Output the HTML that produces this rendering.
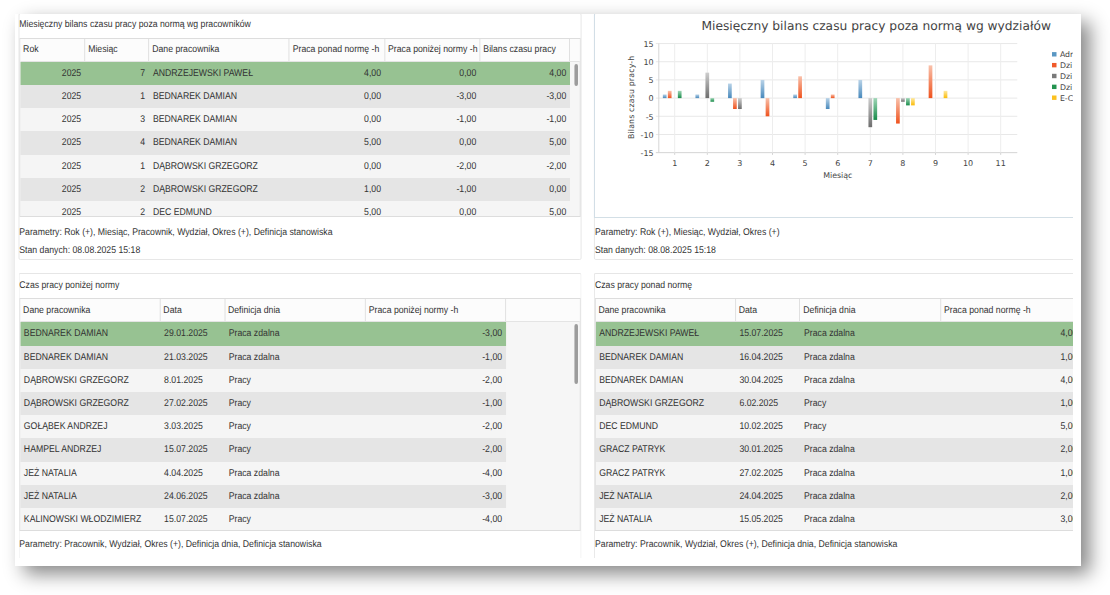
<!DOCTYPE html>
<html lang="pl"><head><meta charset="utf-8"><title>Bilans czasu pracy</title>
<style>
html,body{margin:0;padding:0;background:#fff;}
body{width:1110px;height:595px;overflow:hidden;position:relative;font-family:"Liberation Sans",Arial,sans-serif;font-size:9.8px;color:#333;text-rendering:geometricPrecision;}
#shot{position:absolute;left:14.7px;top:14.3px;width:1066.4px;height:551.6px;background:#fff;box-shadow:9px 8px 18px rgba(0,0,0,.47);overflow:hidden;}
#clip{position:absolute;left:0;top:0;width:1058px;height:551.6px;overflow:hidden;}
#sq{position:absolute;left:0;top:0;width:1300px;height:551.6px;transform:scaleX(0.888);transform-origin:0 0;}
.panel{position:absolute;border:1px solid #e6e6e6;border-radius:2px;box-sizing:border-box;background:#fff;}
.t{position:absolute;white-space:nowrap;line-height:12px;}
.grid{position:absolute;box-sizing:border-box;border:1px solid #dddddd;background:#f6f6f6;overflow:hidden;}
.hd{position:absolute;left:0;top:0;height:22.8px;background:#fcfcfc;border-bottom:1px solid #e4e4e4;box-sizing:border-box;}
.hc{position:absolute;top:0;height:21.8px;line-height:21.8px;box-sizing:border-box;border-right:1px solid #dddddd;padding-left:3.3px;white-space:nowrap;overflow:hidden;}
.r{position:absolute;left:0;height:23.2px;line-height:23.2px;}
.c{position:absolute;top:0;height:100%;box-sizing:border-box;padding:0 4.6px 0 4.15px;white-space:nowrap;overflow:hidden;}
.n{text-align:right;}
.sb{position:absolute;background:#9c9c9c;border-radius:2px;}
svg text{font-family:"DejaVu Sans",Verdana,sans-serif;fill:#444;}

</style></head><body>
<div id="shot"><div id="clip"><div id="sq">
<div class="panel" style="left:3.83px;top:-1.1px;width:633.84px;height:246.6px;"></div>
<div class="t" style="left:4.84px;top:4.8px">Miesięczny bilans czasu pracy poza normą wg pracowników</div>
<div class="grid" style="left:4.83px;top:23.7px;width:631.84px;height:179.5px">
<div class="hd" style="width:631.84px;height:22.8px">
<div class="hc" style="left:0px;width:73.28px;height:21.8px;line-height:21.8px">Rok</div>
<div class="hc" style="left:73.28px;width:72.07px;height:21.8px;line-height:21.8px">Miesiąc</div>
<div class="hc" style="left:145.35px;width:158.28px;height:21.8px;line-height:21.8px">Dane pracownika</div>
<div class="hc" style="left:303.63px;width:107.32px;height:21.8px;line-height:21.8px">Praca ponad normę -h</div>
<div class="hc" style="left:410.95px;width:107.32px;height:21.8px;line-height:21.8px">Praca poniżej normy -h</div>
<div class="hc" style="left:518.27px;width:101.35px;height:21.8px;line-height:21.8px">Bilans czasu pracy</div>
<div class="hc" style="left:619.62px;width:11.71px;height:21.8px;line-height:21.8px"></div>
</div>
<div class="r" style="top:22.8px;width:619.62px;background:#97c292">
<div class="c n" style="left:0px;width:73.28px">2025</div>
<div class="c n" style="left:73.28px;width:72.07px">7</div>
<div class="c" style="left:145.35px;width:158.28px">ANDRZEJEWSKI PAWEŁ</div>
<div class="c n" style="left:303.63px;width:107.32px">4,00</div>
<div class="c n" style="left:410.95px;width:107.32px">0,00</div>
<div class="c n" style="left:518.27px;width:101.35px">4,00</div>
</div>
<div class="r" style="top:46px;width:619.62px;background:#e5e5e5">
<div class="c n" style="left:0px;width:73.28px">2025</div>
<div class="c n" style="left:73.28px;width:72.07px">1</div>
<div class="c" style="left:145.35px;width:158.28px">BEDNAREK DAMIAN</div>
<div class="c n" style="left:303.63px;width:107.32px">0,00</div>
<div class="c n" style="left:410.95px;width:107.32px">-3,00</div>
<div class="c n" style="left:518.27px;width:101.35px">-3,00</div>
</div>
<div class="r" style="top:69.2px;width:619.62px;background:#f5f5f5">
<div class="c n" style="left:0px;width:73.28px">2025</div>
<div class="c n" style="left:73.28px;width:72.07px">3</div>
<div class="c" style="left:145.35px;width:158.28px">BEDNAREK DAMIAN</div>
<div class="c n" style="left:303.63px;width:107.32px">0,00</div>
<div class="c n" style="left:410.95px;width:107.32px">-1,00</div>
<div class="c n" style="left:518.27px;width:101.35px">-1,00</div>
</div>
<div class="r" style="top:92.4px;width:619.62px;background:#e5e5e5">
<div class="c n" style="left:0px;width:73.28px">2025</div>
<div class="c n" style="left:73.28px;width:72.07px">4</div>
<div class="c" style="left:145.35px;width:158.28px">BEDNAREK DAMIAN</div>
<div class="c n" style="left:303.63px;width:107.32px">5,00</div>
<div class="c n" style="left:410.95px;width:107.32px">0,00</div>
<div class="c n" style="left:518.27px;width:101.35px">5,00</div>
</div>
<div class="r" style="top:115.6px;width:619.62px;background:#f5f5f5">
<div class="c n" style="left:0px;width:73.28px">2025</div>
<div class="c n" style="left:73.28px;width:72.07px">1</div>
<div class="c" style="left:145.35px;width:158.28px">DĄBROWSKI GRZEGORZ</div>
<div class="c n" style="left:303.63px;width:107.32px">0,00</div>
<div class="c n" style="left:410.95px;width:107.32px">-2,00</div>
<div class="c n" style="left:518.27px;width:101.35px">-2,00</div>
</div>
<div class="r" style="top:138.8px;width:619.62px;background:#e5e5e5">
<div class="c n" style="left:0px;width:73.28px">2025</div>
<div class="c n" style="left:73.28px;width:72.07px">2</div>
<div class="c" style="left:145.35px;width:158.28px">DĄBROWSKI GRZEGORZ</div>
<div class="c n" style="left:303.63px;width:107.32px">1,00</div>
<div class="c n" style="left:410.95px;width:107.32px">-1,00</div>
<div class="c n" style="left:518.27px;width:101.35px">0,00</div>
</div>
<div class="r" style="top:162px;width:619.62px;background:#f5f5f5">
<div class="c n" style="left:0px;width:73.28px">2025</div>
<div class="c n" style="left:73.28px;width:72.07px">2</div>
<div class="c" style="left:145.35px;width:158.28px">DEC EDMUND</div>
<div class="c n" style="left:303.63px;width:107.32px">5,00</div>
<div class="c n" style="left:410.95px;width:107.32px">0,00</div>
<div class="c n" style="left:518.27px;width:101.35px">5,00</div>
</div>
<div class="sb" style="left:623.73px;top:24.9px;width:4.73px;height:22.5px"></div>
</div>
<div class="t" style="left:4.84px;top:212.8px">Parametry: Rok (+), Miesiąc, Pracownik, Wydział, Okres (+), Definicja stanowiska</div>
<div class="t" style="left:4.84px;top:230.8px">Stan danych: 08.08.2025 15:18</div>
<div class="panel" style="left:3.83px;top:258.6px;width:633.84px;height:284.7px;border-bottom:none;border-radius:2px 2px 0 0"></div>
<div class="t" style="left:4.84px;top:265.8px">Czas pracy poniżej normy</div>
<div class="grid" style="left:4.83px;top:283.9px;width:631.84px;height:233.2px">
<div class="hd" style="width:631.84px;height:23.2px">
<div class="hc" style="left:0px;width:157.96px;height:22.2px;line-height:23.8px">Dane pracownika</div>
<div class="hc" style="left:157.96px;width:72.75px;height:22.2px;line-height:23.8px">Data</div>
<div class="hc" style="left:230.71px;width:158.56px;height:22.2px;line-height:23.8px">Definicja dnia</div>
<div class="hc" style="left:389.27px;width:158px;height:22.2px;line-height:23.8px">Praca poniżej normy -h</div>
<div class="hc" style="left:547.27px;width:84.07px;height:22.2px;line-height:23.8px"></div>
</div>
<div class="r" style="top:23.2px;width:547.27px;background:#97c292">
<div class="c" style="left:0px;width:157.96px">BEDNAREK DAMIAN</div>
<div class="c" style="left:157.96px;width:72.75px">29.01.2025</div>
<div class="c" style="left:230.71px;width:158.56px">Praca zdalna</div>
<div class="c n" style="left:389.27px;width:158px">-3,00</div>
</div>
<div class="r" style="top:46.4px;width:547.27px;background:#e5e5e5">
<div class="c" style="left:0px;width:157.96px">BEDNAREK DAMIAN</div>
<div class="c" style="left:157.96px;width:72.75px">21.03.2025</div>
<div class="c" style="left:230.71px;width:158.56px">Praca zdalna</div>
<div class="c n" style="left:389.27px;width:158px">-1,00</div>
</div>
<div class="r" style="top:69.6px;width:547.27px;background:#f5f5f5">
<div class="c" style="left:0px;width:157.96px">DĄBROWSKI GRZEGORZ</div>
<div class="c" style="left:157.96px;width:72.75px">8.01.2025</div>
<div class="c" style="left:230.71px;width:158.56px">Pracy</div>
<div class="c n" style="left:389.27px;width:158px">-2,00</div>
</div>
<div class="r" style="top:92.8px;width:547.27px;background:#e5e5e5">
<div class="c" style="left:0px;width:157.96px">DĄBROWSKI GRZEGORZ</div>
<div class="c" style="left:157.96px;width:72.75px">27.02.2025</div>
<div class="c" style="left:230.71px;width:158.56px">Pracy</div>
<div class="c n" style="left:389.27px;width:158px">-1,00</div>
</div>
<div class="r" style="top:116px;width:547.27px;background:#f5f5f5">
<div class="c" style="left:0px;width:157.96px">GOŁĄBEK ANDRZEJ</div>
<div class="c" style="left:157.96px;width:72.75px">3.03.2025</div>
<div class="c" style="left:230.71px;width:158.56px">Pracy</div>
<div class="c n" style="left:389.27px;width:158px">-2,00</div>
</div>
<div class="r" style="top:139.2px;width:547.27px;background:#e5e5e5">
<div class="c" style="left:0px;width:157.96px">HAMPEL ANDRZEJ</div>
<div class="c" style="left:157.96px;width:72.75px">15.07.2025</div>
<div class="c" style="left:230.71px;width:158.56px">Pracy</div>
<div class="c n" style="left:389.27px;width:158px">-2,00</div>
</div>
<div class="r" style="top:162.4px;width:547.27px;background:#f5f5f5">
<div class="c" style="left:0px;width:157.96px">JEŻ NATALIA</div>
<div class="c" style="left:157.96px;width:72.75px">4.04.2025</div>
<div class="c" style="left:230.71px;width:158.56px">Praca zdalna</div>
<div class="c n" style="left:389.27px;width:158px">-4,00</div>
</div>
<div class="r" style="top:185.6px;width:547.27px;background:#e5e5e5">
<div class="c" style="left:0px;width:157.96px">JEŻ NATALIA</div>
<div class="c" style="left:157.96px;width:72.75px">24.06.2025</div>
<div class="c" style="left:230.71px;width:158.56px">Praca zdalna</div>
<div class="c n" style="left:389.27px;width:158px">-3,00</div>
</div>
<div class="r" style="top:208.8px;width:547.27px;background:#f5f5f5">
<div class="c" style="left:0px;width:157.96px">KALINOWSKI WŁODZIMIERZ</div>
<div class="c" style="left:157.96px;width:72.75px">15.07.2025</div>
<div class="c" style="left:230.71px;width:158.56px">Pracy</div>
<div class="c n" style="left:389.27px;width:158px">-4,00</div>
</div>
<div class="sb" style="left:623.95px;top:24.6px;width:4.73px;height:60.6px"></div>
</div>
<div class="t" style="left:4.84px;top:524.8px">Parametry: Pracownik, Wydział, Okres (+), Definicja dnia, Definicja stanowiska</div>
<div class="panel" style="left:651.69px;top:258.6px;width:633.84px;height:284.7px;border-bottom:none;border-radius:2px 2px 0 0"></div>
<div class="t" style="left:653.15px;top:265.8px">Czas pracy ponad normę</div>
<div class="grid" style="left:652.69px;top:283.9px;width:631.84px;height:233.2px">
<div class="hd" style="width:631.84px;height:23.2px">
<div class="hc" style="left:0px;width:157.96px;height:22.2px;line-height:23.8px">Dane pracownika</div>
<div class="hc" style="left:157.96px;width:72.75px;height:22.2px;line-height:23.8px">Data</div>
<div class="hc" style="left:230.71px;width:158.56px;height:22.2px;line-height:23.8px">Definicja dnia</div>
<div class="hc" style="left:389.27px;width:158px;height:22.2px;line-height:23.8px">Praca ponad normę -h</div>
<div class="hc" style="left:547.27px;width:84.07px;height:22.2px;line-height:23.8px"></div>
</div>
<div class="r" style="top:23.2px;width:547.27px;background:#97c292">
<div class="c" style="left:0px;width:157.96px">ANDRZEJEWSKI PAWEŁ</div>
<div class="c" style="left:157.96px;width:72.75px">15.07.2025</div>
<div class="c" style="left:230.71px;width:158.56px">Praca zdalna</div>
<div class="c n" style="left:389.27px;width:158px">4,00</div>
</div>
<div class="r" style="top:46.4px;width:547.27px;background:#e5e5e5">
<div class="c" style="left:0px;width:157.96px">BEDNAREK DAMIAN</div>
<div class="c" style="left:157.96px;width:72.75px">16.04.2025</div>
<div class="c" style="left:230.71px;width:158.56px">Praca zdalna</div>
<div class="c n" style="left:389.27px;width:158px">1,00</div>
</div>
<div class="r" style="top:69.6px;width:547.27px;background:#f5f5f5">
<div class="c" style="left:0px;width:157.96px">BEDNAREK DAMIAN</div>
<div class="c" style="left:157.96px;width:72.75px">30.04.2025</div>
<div class="c" style="left:230.71px;width:158.56px">Praca zdalna</div>
<div class="c n" style="left:389.27px;width:158px">4,00</div>
</div>
<div class="r" style="top:92.8px;width:547.27px;background:#e5e5e5">
<div class="c" style="left:0px;width:157.96px">DĄBROWSKI GRZEGORZ</div>
<div class="c" style="left:157.96px;width:72.75px">6.02.2025</div>
<div class="c" style="left:230.71px;width:158.56px">Pracy</div>
<div class="c n" style="left:389.27px;width:158px">1,00</div>
</div>
<div class="r" style="top:116px;width:547.27px;background:#f5f5f5">
<div class="c" style="left:0px;width:157.96px">DEC EDMUND</div>
<div class="c" style="left:157.96px;width:72.75px">10.02.2025</div>
<div class="c" style="left:230.71px;width:158.56px">Pracy</div>
<div class="c n" style="left:389.27px;width:158px">5,00</div>
</div>
<div class="r" style="top:139.2px;width:547.27px;background:#e5e5e5">
<div class="c" style="left:0px;width:157.96px">GRACZ PATRYK</div>
<div class="c" style="left:157.96px;width:72.75px">30.01.2025</div>
<div class="c" style="left:230.71px;width:158.56px">Praca zdalna</div>
<div class="c n" style="left:389.27px;width:158px">2,00</div>
</div>
<div class="r" style="top:162.4px;width:547.27px;background:#f5f5f5">
<div class="c" style="left:0px;width:157.96px">GRACZ PATRYK</div>
<div class="c" style="left:157.96px;width:72.75px">27.02.2025</div>
<div class="c" style="left:230.71px;width:158.56px">Praca zdalna</div>
<div class="c n" style="left:389.27px;width:158px">1,00</div>
</div>
<div class="r" style="top:185.6px;width:547.27px;background:#e5e5e5">
<div class="c" style="left:0px;width:157.96px">JEŻ NATALIA</div>
<div class="c" style="left:157.96px;width:72.75px">24.04.2025</div>
<div class="c" style="left:230.71px;width:158.56px">Praca zdalna</div>
<div class="c n" style="left:389.27px;width:158px">2,00</div>
</div>
<div class="r" style="top:208.8px;width:547.27px;background:#f5f5f5">
<div class="c" style="left:0px;width:157.96px">JEŻ NATALIA</div>
<div class="c" style="left:157.96px;width:72.75px">15.05.2025</div>
<div class="c" style="left:230.71px;width:158.56px">Praca zdalna</div>
<div class="c n" style="left:389.27px;width:158px">3,00</div>
</div>
</div>
<div class="t" style="left:653.15px;top:524.8px">Parametry: Pracownik, Wydział, Okres (+), Definicja dnia, Definicja stanowiska</div>
<div class="panel" style="left:651.69px;top:-1.1px;width:633.84px;height:246.6px"></div>
<div style="position:absolute;box-sizing:border-box;left:651.69px;top:-1.1px;width:633.84px;height:204.3px;border-left:1px solid #cfdde6;border-bottom:1px solid #d3dfe6"></div>
<div class="t" style="left:653.15px;top:212.8px">Parametry: Rok (+), Miesiąc, Wydział, Okres (+)</div>
<div class="t" style="left:653.15px;top:230.8px">Stan danych: 08.08.2025 15:18</div>
</div>
<svg style="position:absolute;left:580.3px;top:0.7px" width="562" height="200" viewBox="0 0 562 200">
<defs>
<linearGradient id="b" x1="0" y1="0" x2="0" y2="1"><stop offset="0" stop-color="#b9d3e8"/><stop offset="1" stop-color="#4889bc"/></linearGradient>
<linearGradient id="o" x1="0" y1="0" x2="0" y2="1"><stop offset="0" stop-color="#f9c1ab"/><stop offset="1" stop-color="#ef521d"/></linearGradient>
<linearGradient id="g" x1="0" y1="0" x2="0" y2="1"><stop offset="0" stop-color="#cecece"/><stop offset="1" stop-color="#6d6d6d"/></linearGradient>
<linearGradient id="gr" x1="0" y1="0" x2="0" y2="1"><stop offset="0" stop-color="#a0d6b7"/><stop offset="1" stop-color="#178b49"/></linearGradient>
<linearGradient id="y" x1="0" y1="0" x2="0" y2="1"><stop offset="0" stop-color="#fde8a0"/><stop offset="1" stop-color="#fbbc08"/></linearGradient>
</defs>
<text x="281.2" y="14.6" font-size="12.25" text-anchor="middle" fill="#484848">Miesięczny bilans czasu pracy poza normą wg wydziałów</text>
<line x1="60.8" y1="28.55" x2="422.3" y2="28.55" stroke="#e8e8e8" stroke-width="1"/>
<text x="58.7" y="31.85" font-size="8" text-anchor="end">15</text>
<line x1="60.8" y1="46.73" x2="422.3" y2="46.73" stroke="#e8e8e8" stroke-width="1"/>
<text x="58.7" y="50.03" font-size="8" text-anchor="end">10</text>
<line x1="60.8" y1="64.92" x2="422.3" y2="64.92" stroke="#e8e8e8" stroke-width="1"/>
<text x="58.7" y="68.22" font-size="8" text-anchor="end">5</text>
<line x1="60.8" y1="83.1" x2="422.3" y2="83.1" stroke="#e8e8e8" stroke-width="1"/>
<text x="58.7" y="86.4" font-size="8" text-anchor="end">0</text>
<line x1="60.8" y1="101.28" x2="422.3" y2="101.28" stroke="#e8e8e8" stroke-width="1"/>
<text x="58.7" y="104.58" font-size="8" text-anchor="end">-5</text>
<line x1="60.8" y1="119.47" x2="422.3" y2="119.47" stroke="#e8e8e8" stroke-width="1"/>
<text x="58.7" y="122.77" font-size="8" text-anchor="end">-10</text>
<line x1="60.8" y1="137.65" x2="422.3" y2="137.65" stroke="#d4d4d4" stroke-width="1"/>
<text x="58.7" y="140.95" font-size="8" text-anchor="end">-15</text>
<line x1="79.7" y1="28.55" x2="79.7" y2="137.65" stroke="#ededed" stroke-width="1"/>
<line x1="79.7" y1="137.65" x2="79.7" y2="139.85" stroke="#d4d4d4" stroke-width="1"/>
<text x="79.7" y="150.5" font-size="8" text-anchor="middle">1</text>
<line x1="112.3" y1="28.55" x2="112.3" y2="137.65" stroke="#ededed" stroke-width="1"/>
<line x1="112.3" y1="137.65" x2="112.3" y2="139.85" stroke="#d4d4d4" stroke-width="1"/>
<text x="112.3" y="150.5" font-size="8" text-anchor="middle">2</text>
<line x1="144.9" y1="28.55" x2="144.9" y2="137.65" stroke="#ededed" stroke-width="1"/>
<line x1="144.9" y1="137.65" x2="144.9" y2="139.85" stroke="#d4d4d4" stroke-width="1"/>
<text x="144.9" y="150.5" font-size="8" text-anchor="middle">3</text>
<line x1="177.5" y1="28.55" x2="177.5" y2="137.65" stroke="#ededed" stroke-width="1"/>
<line x1="177.5" y1="137.65" x2="177.5" y2="139.85" stroke="#d4d4d4" stroke-width="1"/>
<text x="177.5" y="150.5" font-size="8" text-anchor="middle">4</text>
<line x1="210.1" y1="28.55" x2="210.1" y2="137.65" stroke="#ededed" stroke-width="1"/>
<line x1="210.1" y1="137.65" x2="210.1" y2="139.85" stroke="#d4d4d4" stroke-width="1"/>
<text x="210.1" y="150.5" font-size="8" text-anchor="middle">5</text>
<line x1="242.7" y1="28.55" x2="242.7" y2="137.65" stroke="#ededed" stroke-width="1"/>
<line x1="242.7" y1="137.65" x2="242.7" y2="139.85" stroke="#d4d4d4" stroke-width="1"/>
<text x="242.7" y="150.5" font-size="8" text-anchor="middle">6</text>
<line x1="275.3" y1="28.55" x2="275.3" y2="137.65" stroke="#ededed" stroke-width="1"/>
<line x1="275.3" y1="137.65" x2="275.3" y2="139.85" stroke="#d4d4d4" stroke-width="1"/>
<text x="275.3" y="150.5" font-size="8" text-anchor="middle">7</text>
<line x1="307.9" y1="28.55" x2="307.9" y2="137.65" stroke="#ededed" stroke-width="1"/>
<line x1="307.9" y1="137.65" x2="307.9" y2="139.85" stroke="#d4d4d4" stroke-width="1"/>
<text x="307.9" y="150.5" font-size="8" text-anchor="middle">8</text>
<line x1="340.5" y1="28.55" x2="340.5" y2="137.65" stroke="#ededed" stroke-width="1"/>
<line x1="340.5" y1="137.65" x2="340.5" y2="139.85" stroke="#d4d4d4" stroke-width="1"/>
<text x="340.5" y="150.5" font-size="8" text-anchor="middle">9</text>
<line x1="373.1" y1="28.55" x2="373.1" y2="137.65" stroke="#ededed" stroke-width="1"/>
<line x1="373.1" y1="137.65" x2="373.1" y2="139.85" stroke="#d4d4d4" stroke-width="1"/>
<text x="373.1" y="150.5" font-size="8" text-anchor="middle">10</text>
<line x1="405.7" y1="28.55" x2="405.7" y2="137.65" stroke="#ededed" stroke-width="1"/>
<line x1="405.7" y1="137.65" x2="405.7" y2="139.85" stroke="#d4d4d4" stroke-width="1"/>
<text x="405.7" y="150.5" font-size="8" text-anchor="middle">11</text>
<line x1="63.8" y1="28.55" x2="63.8" y2="137.65" stroke="#d6d6d6" stroke-width="1"/>
<text x="242.8" y="163.4" font-size="7.9" text-anchor="middle">Miesiąc</text>
<text transform="translate(39.3 82.3) rotate(-90)" font-size="7.9" letter-spacing="0.12" text-anchor="middle">Bilans czasu pracy-h</text>
<rect x="67.85" y="79.46" width="3.7" height="3.64" fill="url(#b)"/>
<rect x="72.85" y="75.83" width="3.7" height="7.27" fill="url(#o)"/>
<rect x="82.85" y="75.83" width="3.7" height="7.27" fill="url(#gr)"/>
<rect x="100.45" y="79.46" width="3.7" height="3.64" fill="url(#b)"/>
<rect x="110.45" y="57.64" width="3.7" height="25.46" fill="url(#g)"/>
<rect x="115.45" y="83.1" width="3.7" height="3.64" fill="url(#gr)"/>
<rect x="133.05" y="68.55" width="3.7" height="14.55" fill="url(#b)"/>
<rect x="138.05" y="83.1" width="3.7" height="10.91" fill="url(#o)"/>
<rect x="143.05" y="83.1" width="3.7" height="10.91" fill="url(#g)"/>
<rect x="165.65" y="64.92" width="3.7" height="18.18" fill="url(#b)"/>
<rect x="170.65" y="83.1" width="3.7" height="18.18" fill="url(#o)"/>
<rect x="198.25" y="79.46" width="3.7" height="3.64" fill="url(#b)"/>
<rect x="203.25" y="61.28" width="3.7" height="21.82" fill="url(#o)"/>
<rect x="230.85" y="83.1" width="3.7" height="10.91" fill="url(#b)"/>
<rect x="235.85" y="79.46" width="3.7" height="3.64" fill="url(#o)"/>
<rect x="263.45" y="64.92" width="3.7" height="18.18" fill="url(#b)"/>
<rect x="273.45" y="83.1" width="3.7" height="29.09" fill="url(#g)"/>
<rect x="278.45" y="83.1" width="3.7" height="21.82" fill="url(#gr)"/>
<rect x="301.05" y="83.1" width="3.7" height="25.46" fill="url(#o)"/>
<rect x="306.05" y="83.1" width="3.7" height="3.64" fill="url(#g)"/>
<rect x="311.05" y="83.1" width="3.7" height="7.27" fill="url(#gr)"/>
<rect x="316.05" y="83.1" width="3.7" height="7.27" fill="url(#y)"/>
<rect x="333.65" y="50.37" width="3.7" height="32.73" fill="url(#o)"/>
<rect x="348.65" y="75.83" width="3.7" height="7.27" fill="url(#y)"/>
<rect x="457" y="37.1" width="4.5" height="4.4" fill="#5a97c3"/>
<text x="464.9" y="42.2" font-size="7.8">Adr</text>
<rect x="457" y="47.95" width="4.5" height="4.4" fill="#f05a2a"/>
<text x="464.9" y="53.05" font-size="7.8">Dzi</text>
<rect x="457" y="58.8" width="4.5" height="4.4" fill="#7a7a7a"/>
<text x="464.9" y="63.9" font-size="7.8">Dzi</text>
<rect x="457" y="69.65" width="4.5" height="4.4" fill="#23934f"/>
<text x="464.9" y="74.75" font-size="7.8">Dzi</text>
<rect x="457" y="80.5" width="4.5" height="4.4" fill="#fcc11f"/>
<text x="464.9" y="85.6" font-size="7.8">E-C</text>
</svg>
</div></div>
</body></html>
